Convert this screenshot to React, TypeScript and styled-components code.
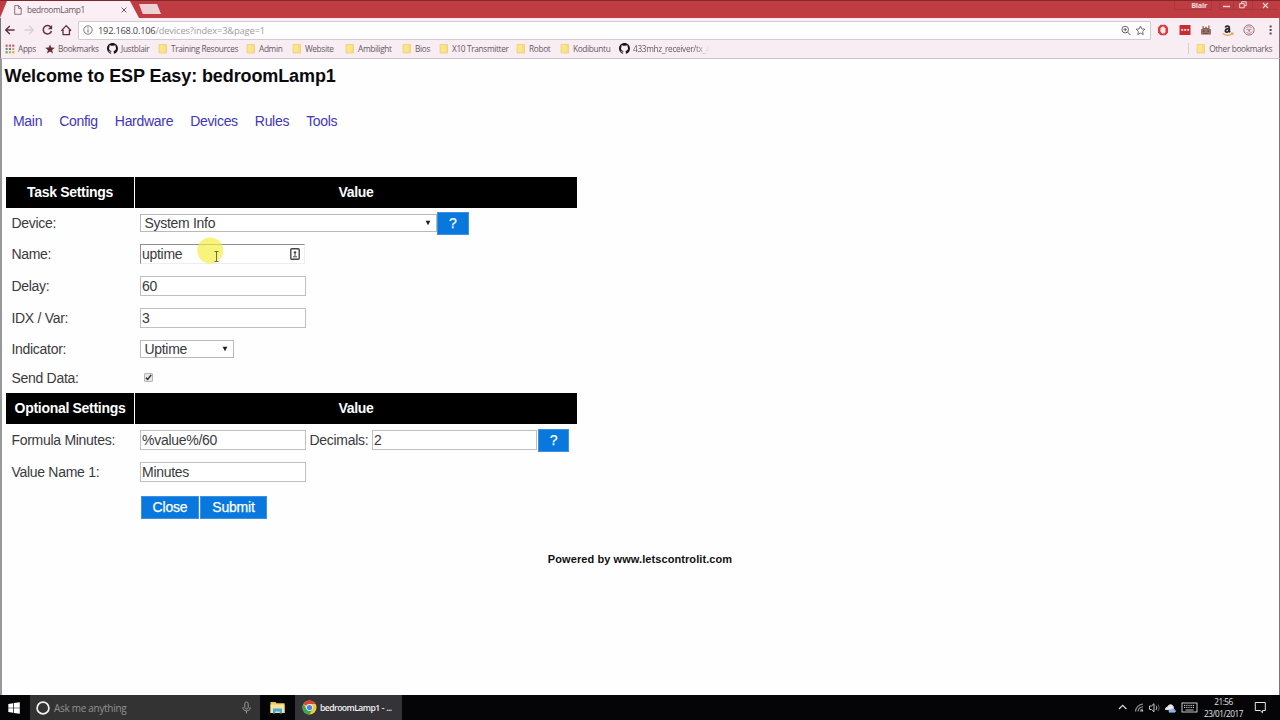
import React from "react";
import styled, { createGlobalStyle } from "styled-components";

const GlobalStyle = createGlobalStyle`
  * { box-sizing: border-box; }
  body { margin: 0; background: #fefefe; overflow: hidden; }
  svg { flex: none; }
`;

const chromeFont = `"Open Sans", "Noto Sans", sans-serif`;

const Screen = styled.div`
  width: 1280px;
  height: 720px;
  display: flex;
  flex-direction: column;
  font-family: "Liberation Sans", Arial, sans-serif;
  color: #333;
`;

const TitleBar = styled.header`
  height: 18px;
  flex: none;
  display: flex;
  align-items: flex-start;
  justify-content: space-between;
  background: #bf3d42;
  border-top: 1px solid #82282b;
  font-family: ${chromeFont};
`;

const TabStrip = styled.div`
  display: flex;
  height: 17px;
`;

const Tab = styled.div`
  width: 139px;
  height: 17px;
  padding: 0 12px 0 14px;
  display: flex;
  align-items: center;
  background: #fbeff5;
  clip-path: polygon(7px 0, 130px 0, 139px 100%, 0 100%);
  font-size: 8.3px;
  color: #65575c;
`;

const TabTitle = styled.span`
  flex: 1;
  margin-left: 5px;
  line-height: 15px;
  letter-spacing: -0.38px;
`;

const NewTab = styled.div`
  width: 22px;
  height: 10px;
  margin-top: 3px;
  background: #edcfd4;
  clip-path: polygon(0 0, 82% 0, 100% 100%, 17% 100%);
`;

const WindowControls = styled.div`
  display: flex;
  height: 9px;
  margin-right: 2px;
`;

const Control = styled.div<{ $w: number }>`
  width: ${(p) => p.$w}px;
  height: 9px;
  display: flex;
  align-items: center;
  justify-content: center;
  border: 1px solid #a8383d;
  border-width: 0 0 1px 1px;
  color: #f3d9da;
`;

const UserName = styled(Control)`
  justify-content: flex-end;
  margin-right: 7px;
  padding-right: 4px;
  border-right-width: 1px;
  font-size: 7.4px;
  font-weight: 700;
  line-height: 8px;
  letter-spacing: -0.3px;
`;

const Toolbar = styled.div`
  height: 23px;
  flex: none;
  display: flex;
  align-items: center;
  padding: 1px 2px 0 4px;
  background: #f9edf4;
  border-left: 1px solid #777;
  border-right: 1px solid #8b7077;
`;

const NavIcons = styled.div`
  width: 73px;
  display: flex;
  gap: 6.6px;
`;

const Address = styled.div`
  width: 1073px;
  flex: none;
  height: 19px;
  display: flex;
  align-items: center;
  padding: 0 4px 0 4px;
  background: #fefefe;
  border: 1px solid #d3cbd0;
  border-radius: 1px;
  font-family: ${chromeFont};
`;

const Url = styled.div`
  flex: 1;
  margin-left: 5px;
  padding-top: 1px;
  font-size: 9.3px;
  line-height: 16px;
  color: #a19ba0;
`;

const Host = styled.span`
  color: #493e46;
  letter-spacing: -0.24px;
`;

const Path = styled.span`
  letter-spacing: -0.12px;
`;

const Extensions = styled.div`
  flex: 1;
  display: flex;
  align-items: center;
  gap: 9.6px;
  padding-left: 6px;
`;

const BookmarksBar = styled.nav`
  height: 18px;
  flex: none;
  display: flex;
  align-items: center;
  padding: 0 7px 2px 4px;
  background: #f9edf4;
  border-bottom: 1px solid #ccc4c8;
  border-left: 1px solid #777;
  border-right: 1px solid #8b7077;
  font-family: ${chromeFont};
  font-size: 8.3px;
  color: #65595f;
`;

const Bookmark = styled.div<{ $w: number }>`
  width: ${(p) => p.$w}px;
  flex: none;
  display: flex;
  align-items: center;
  white-space: nowrap;
  overflow: hidden;
`;

const BookmarkLabel = styled.span<{ $fade?: boolean }>`
  margin-left: 3px;
  line-height: 15px;
  letter-spacing: -0.35px;
  ${(p) => p.$fade && "mask-image: linear-gradient(90deg, #000 80%, transparent);"}
`;

const Spacer = styled.div`
  flex: 1;
`;

const Divider = styled.div`
  width: 1px;
  height: 11px;
  margin-right: 7px;
  background: #d5cbd0;
`;

const Page = styled.main`
  flex: 1;
  min-height: 0;
  display: flex;
  flex-direction: column;
  padding: 0 0 0 4px;
  border-left: 2px solid #98989a;
  border-right: 1px solid #777;
  background: #fefefe;
`;

const Heading = styled.h1`
  margin: 5px 0 0 -1.4px;
  height: 24px;
  font-size: 18px;
  line-height: 24px;
  letter-spacing: -0.1px;
  font-weight: 700;
  color: #0b0b0f;
`;

const Menu = styled.nav`
  display: flex;
  gap: 17px;
  margin: 22px 0 0 7px;
  height: 22px;
  font-size: 14px;
  line-height: 22px;
  letter-spacing: -0.3px;
`;

const MenuLink = styled.a`
  color: #4136bd;
`;

const Settings = styled.section`
  width: 571px;
  margin-top: 45px;
`;

const HeaderRow = styled.div`
  height: 31px;
  display: grid;
  grid-template-columns: 128px 442px;
  column-gap: 1px;
`;

const HeaderCell = styled.div`
  display: flex;
  align-items: center;
  justify-content: center;
  padding-bottom: 2px;
  background: #000;
  color: #fff;
  font-size: 14px;
  letter-spacing: -0.3px;
  font-weight: 700;
`;

const Row = styled.div<{ $h: number; $lift?: number }>`
  height: ${(p) => p.$h}px;
  padding-bottom: ${(p) => p.$lift ?? 0}px;
  display: grid;
  grid-template-columns: 129px 442px;
`;

const Label = styled.div`
  display: flex;
  align-items: center;
  padding-left: 5.4px;
  font-size: 14px;
  letter-spacing: -0.28px;
  line-height: 18px;
  color: #3a3a3c;
`;

const Cell = styled.div`
  display: flex;
  align-items: center;
  padding-left: 5px;
  font-size: 14px;
  letter-spacing: -0.28px;
  color: #3a3a3c;
`;

const Field = styled.div<{ $w?: number }>`
  width: ${(p) => p.$w ?? 166}px;
  height: 20px;
  display: flex;
  align-items: center;
  justify-content: space-between;
  padding: 0 5px 0 1px;
  border: 1px solid #c0c0c0;
  line-height: 18px;
  background: #fff;
`;

const InsetField = styled(Field)`
  padding-right: 4px;
  padding-bottom: 1px;
  border-color: #8e8e8e #eee #eee #8e8e8e;
`;

const SelectBox = styled.div<{ $w: number }>`
  width: ${(p) => p.$w}px;
  height: 18px;
  display: flex;
  align-items: center;
  justify-content: space-between;
  padding: 0 5px 0 3.4px;
  border: 1px solid #b9b9b9;
  line-height: 16px;
  background: #fff;
`;

const Button = styled.div<{ $w: number; $flush?: boolean }>`
  width: ${(p) => p.$w}px;
  height: 23px;
  display: flex;
  align-items: center;
  justify-content: center;
  margin-left: ${(p) => (p.$flush ? 0 : 1)}px;
  background: #0877de;
  border: 1px solid #3f92e2;
  color: #fff;
  font-size: 14px;
  letter-spacing: -0.2px;
  -webkit-text-stroke: 0.25px #fff;
`;

const Inline = styled.span`
  width: 66px;
  padding-left: 3.4px;
`;

const CheckBox = styled.div`
  width: 9px;
  height: 9px;
  margin-left: 4px;
  display: flex;
  border: 1px solid #b5b5b5;
  border-radius: 1px;
  background: #e6e6e6;
`;

const Footer = styled.footer`
  margin: 25px 5px 0 0;
  height: 16px;
  text-align: center;
  font-size: 11px;
  line-height: 16px;
  letter-spacing: 0.08px;
  font-weight: 700;
  color: #111;
`;

const Pointer = styled.svg`
  position: absolute;
  left: 196px;
  top: 236px;
`;

const Taskbar = styled.footer`
  height: 25px;
  flex: none;
  display: flex;
  align-items: stretch;
  background: #050508;
  font-family: ${chromeFont};
`;

const StartButton = styled.div`
  width: 30px;
  display: flex;
  align-items: center;
  justify-content: center;
  padding-right: 2px;
`;

const Search = styled.div`
  width: 230px;
  display: flex;
  align-items: center;
  padding: 0 9px 0 6px;
  background: #333334;
  font-size: 10px;
  letter-spacing: -0.3px;
  color: #929292;
`;

const SearchText = styled.span`
  flex: 1;
  margin-left: 4px;
`;

const TaskIcon = styled.div`
  width: 35px;
  display: flex;
  align-items: center;
  justify-content: center;
`;

const TaskItem = styled.div`
  width: 107px;
  display: flex;
  align-items: center;
  gap: 3px;
  padding-left: 7px;
  background: #333338;
  color: #f2f2f2;
  font-size: 8.6px;
  font-weight: 600;
  letter-spacing: -0.55px;
  word-spacing: 0.5px;
  white-space: nowrap;
`;

const Tray = styled.div`
  display: flex;
  align-items: center;
  margin-right: 13px;
`;

const Clock = styled.div`
  width: 56px;
  padding-right: 5px;
  text-align: center;
  font-size: 8.2px;
  line-height: 12px;
  letter-spacing: -0.45px;
  color: #e4e4e4;
`;

const FolderIcon = () => (
  <svg width="10" height="11" viewBox="0 0 10 11">
    <path d="M1 1.5h7.5v8.5H1z" fill="#fbe48c" stroke="#e8cb6c" strokeWidth=".7" />
    <path d="M7.2 1.5v8.5" stroke="#f2d675" strokeWidth=".8" />
  </svg>
);

const GithubIcon = () => (
  <svg width="11" height="11" viewBox="0 0 16 16">
    <path
      fill="#18161a"
      d="M8 0C3.58 0 0 3.58 0 8c0 3.54 2.29 6.53 5.47 7.59.4.07.55-.17.55-.38v-1.49c-2.01.37-2.53-.49-2.69-.94-.09-.23-.48-.94-.82-1.13-.28-.15-.68-.52-.01-.53.63-.01 1.08.58 1.23.82.72 1.21 1.87.87 2.33.66.07-.52.28-.87.51-1.07-1.78-.2-3.64-.89-3.64-3.95 0-.87.31-1.59.82-2.15-.08-.2-.36-1.02.08-2.12 0 0 .67-.21 2.2.82A7.6 7.6 0 0 1 8 3.86c.68 0 1.36.09 2 .27 1.53-1.04 2.2-.82 2.2-.82.44 1.1.16 1.92.08 2.12.51.56.82 1.27.82 2.15 0 3.07-1.87 3.75-3.65 3.95.29.25.54.73.54 1.48v2.2c0 .21.15.46.55.38A8 8 0 0 0 16 8c0-4.42-3.58-8-8-8z"
    />
  </svg>
);

const AppsIcon = () => (
  <svg width="10" height="10" viewBox="0 0 10 10">
    {["#c65a5a", "#bb6565", "#c65a5a", "#5e9d68", "#5b7fc0", "#d1a644", "#5e9d68", "#d1a644", "#d1a644"].map((c, i) => (
      <rect key={i} x={0.6 + (i % 3) * 3.3} y={0.6 + Math.floor(i / 3) * 3.3} width="2.1" height="2.1" fill={c} />
    ))}
  </svg>
);

const StarIcon = () => (
  <svg width="10" height="10" viewBox="0 0 10 10">
    <path d="M5 .4l1.3 3.2 3.5.2L7.1 6l.9 3.5L5 7.6 2 9.5 2.9 6 .2 3.8l3.5-.2z" fill="#632c37" />
  </svg>
);

const PageIcon = () => (
  <svg width="8" height="10" viewBox="0 0 8 10" fill="none" stroke="#75686e" strokeWidth=".9">
    <path d="M.7.6h4l2.5 2.6v6.1H.7zM4.6.8v2.6h2.5" />
  </svg>
);

const Navigation = () => (
  <NavIcons>
    <svg width="12" height="12" viewBox="0 0 12 12" fill="none" stroke="#5d303b" strokeWidth="1.4">
      <path d="M9.6 6H1M4.8 1.9L.7 6l4.1 4.1" />
    </svg>
    <svg width="12" height="12" viewBox="0 0 12 12" fill="none" stroke="#d9ccd2" strokeWidth="1.3">
      <path d="M.5 6h8.8M5.1 1.9L9.2 6l-4.1 4.1" />
    </svg>
    <svg width="12" height="12" viewBox="0 0 12 12" fill="none" stroke="#5d303b" strokeWidth="1.5">
      <path d="M8.8 3.2A4.2 4.2 0 1 0 9.5 7" />
      <path d="M10.1 1v4.2H5.9z" fill="#5d303b" stroke="none" />
    </svg>
    <svg width="12" height="12" viewBox="0 0 12 12" fill="none" stroke="#5d303b" strokeWidth="1.3">
      <path d="M.3 6.8L5.2 1.6l4.9 5.2M2 5.8v4.9h6.4V5.8" />
    </svg>
  </NavIcons>
);

const ExtensionIcons = () => (
  <Extensions>
    <svg width="12" height="12" viewBox="0 0 11 12">
      <path d="M3 .8h5l2.5 2.7v5L8 11.2H3L.5 8.5v-5z" fill="#d83b40" />
      <path d="M3 6V3.8h1V2.9h1V2.2h1v.7h1v1h1v4L6.8 9.5H4.5L2.6 7z" fill="#fbe8ea" />
    </svg>
    <svg width="12" height="10" viewBox="0 0 11 10">
      <rect width="11" height="10" fill="#cb2c34" />
      <path d="M1.7 4.1h2v1.6h-2zm3 0h2v1.6h-2zm3 0h1.8v1.6H7.7z" fill="#f7dce0" />
    </svg>
    <svg width="12" height="10" viewBox="0 0 11 10">
      <path d="M.5 4h10v5.6H.5z" fill="#9b6e66" />
      <path d="M2 4V1h1.2v2h1.6V1.8h1.4V3h1.6V.6H9V4z" fill="#79605f" />
      <path d="M2.3 5.5h1.6v1.2H2.3zm4.6 0h1.6v1.2H6.9zM3 8h5v.8H3z" fill="#584349" />
    </svg>
    <svg width="12" height="13" viewBox="0 0 12 13" fill="none">
      <path d="M3.3 3.5C3.8 1.6 7.3 1.5 7.3 3.9v3.4l.8 1M7.2 4.7C2.6 4.6 2.6 8.2 4.7 8.2c1.4 0 2.3-1 2.5-2" stroke="#29252a" strokeWidth="1.7" />
      <path d="M.6 9.2c3 2.5 7 2.5 10 .2M8.6 9h2.2v2" stroke="#e6a34c" strokeWidth="1.2" />
    </svg>
    <svg width="12" height="12" viewBox="0 0 12 12" fill="none" stroke="#8c777e">
      <circle cx="6" cy="6" r="5.1" strokeWidth="1" />
      <path d="M2.8 4.2c1-1.8 5.1-2 6.2.1M3 7.8C4.6 10.1 8 9.8 9.2 7.4M3.4 5.4h2v2M8.6 5.2h-2v3" stroke="#ac6c70" strokeWidth=".8" />
    </svg>
    <svg width="12" height="12" viewBox="0 0 4 12" fill="#61414c">
      <rect x=".6" y="1.5" width="2" height="2" />
      <rect x=".6" y="5" width="2" height="2" />
      <rect x=".6" y="8.5" width="2" height="2" />
    </svg>
  </Extensions>
);

const Arrow = () => (
  <svg width="6" height="6" viewBox="0 0 6 6">
    <path d="M.6.8h4.8L3 5.3z" fill="#222" />
  </svg>
);

const bookmarks: Array<[string, number, "folder" | "git"]> = [
  ["Justblair", 51, "git"],
  ["Training Resources", 88, "folder"],
  ["Admin", 46, "folder"],
  ["Website", 53, "folder"],
  ["Ambilight", 57, "folder"],
  ["Bios", 37, "folder"],
  ["X10 Transmitter", 77, "folder"],
  ["Robot", 44, "folder"],
  ["Kodibuntu", 59, "folder"],
];

const FieldRow = ({ label, value }: { label: string; value: string }) => (
  <Row $h={32}>
    <Label>{label}</Label>
    <Cell>
      <Field>{value}</Field>
    </Cell>
  </Row>
);

const SectionHeader = ({ title }: { title: string }) => (
  <HeaderRow>
    <HeaderCell>{title}</HeaderCell>
    <HeaderCell>Value</HeaderCell>
  </HeaderRow>
);

export default function App() {
  return (
    <Screen>
      <GlobalStyle />
      <TitleBar>
        <TabStrip>
          <Tab>
            <PageIcon />
            <TabTitle>bedroomLamp1</TabTitle>
            <svg width="6" height="6" viewBox="0 0 6 6" stroke="#6c5960" strokeWidth="1">
              <path d="M.6.6l4.8 4.8M5.4.6L.6 5.4" />
            </svg>
          </Tab>
          <NewTab />
        </TabStrip>
        <WindowControls>
          <UserName $w={38}>Blair</UserName>
          <Control $w={14}>
            <svg width="7" height="6"><path d="M0 4.5h7" stroke="#f3d9da" strokeWidth="1.4" /></svg>
          </Control>
          <Control $w={19}>
            <svg width="8" height="8" viewBox="0 0 8 8" fill="none" stroke="#f3d9da">
              <path d="M.7 2.6h4.5v4.2H.7zM2.6 2.3V.7h4.6v4H5.5" />
            </svg>
          </Control>
          <Control $w={26}>
            <svg width="7" height="7" viewBox="0 0 7 7" stroke="#f3d9da" strokeWidth="1.1">
              <path d="M1 1l5 5M6 1L1 6" />
            </svg>
          </Control>
        </WindowControls>
      </TitleBar>
      <Toolbar>
        <Navigation />
        <Address>
          <svg width="10" height="10" viewBox="0 0 10 10" fill="none" stroke="#756b72">
            <circle cx="5" cy="5" r="4.2" strokeWidth=".9" />
            <path d="M5 4.3v3.2M5 2.4v1.1" strokeWidth="1" />
          </svg>
          <Url>
            <Host>192.168.0.106</Host>
            <Path>/devices?index=3&amp;page=1</Path>
          </Url>
          <svg width="25" height="11" viewBox="0 0 25 11" fill="none" stroke="#665d64">
            <circle cx="4.2" cy="4.6" r="3.3" strokeWidth="1" />
            <path d="M6.7 7.1l2.8 3M2.6 4.6h3.2M4.2 3v3.2" strokeWidth="1" />
            <path d="M19.5 1l1.3 2.9 3.1.3-2.3 2.2.6 3.2-2.7-1.6-2.7 1.6.6-3.2-2.3-2.2 3.1-.3z" strokeWidth=".9" />
          </svg>
        </Address>
        <ExtensionIcons />
      </Toolbar>
      <BookmarksBar>
        <Bookmark $w={40}>
          <AppsIcon />
          <BookmarkLabel>Apps</BookmarkLabel>
        </Bookmark>
        <Bookmark $w={62}>
          <StarIcon />
          <BookmarkLabel>Bookmarks</BookmarkLabel>
        </Bookmark>
        {bookmarks.map(([label, width, icon]) => (
          <Bookmark key={label} $w={width}>
            {icon === "git" ? <GithubIcon /> : <FolderIcon />}
            <BookmarkLabel>{label}</BookmarkLabel>
          </Bookmark>
        ))}
        <Bookmark $w={91}>
          <GithubIcon />
          <BookmarkLabel $fade>433mhz_receiver/tx_4</BookmarkLabel>
        </Bookmark>
        <Spacer />
        <Divider />
        <FolderIcon />
        <BookmarkLabel>Other bookmarks</BookmarkLabel>
      </BookmarksBar>
      <Page>
        <Heading>Welcome to ESP Easy: bedroomLamp1</Heading>
        <Menu>
          {["Main", "Config", "Hardware", "Devices", "Rules", "Tools"].map((m) => (
            <MenuLink key={m}>{m}</MenuLink>
          ))}
        </Menu>
        <Settings>
          <SectionHeader title="Task Settings" />
          <Row $h={30}>
            <Label>Device:</Label>
            <Cell>
              <SelectBox $w={297}>System Info<Arrow /></SelectBox>
              <Button $w={31.5} $flush>?</Button>
            </Cell>
          </Row>
          <Row $h={32}>
            <Label>Name:</Label>
            <Cell>
              <InsetField $w={165}>
                uptime
                <svg width="10" height="12" viewBox="0 0 10 12" fill="none" stroke="#444">
                  <rect x=".8" y=".8" width="8.4" height="10.4" rx="1" strokeWidth="1.4" />
                  <path d="M3 8.8h4M5 5.8V8" strokeWidth="1" />
                  <circle cx="5" cy="4.5" r="1.3" fill="#444" stroke="none" />
                </svg>
              </InsetField>
            </Cell>
          </Row>
          <FieldRow label="Delay:" value="60" />
          <FieldRow label="IDX / Var:" value="3" />
          <Row $h={30}>
            <Label>Indicator:</Label>
            <Cell>
              <SelectBox $w={94}>Uptime<Arrow /></SelectBox>
            </Cell>
          </Row>
          <Row $h={29} $lift={2}>
            <Label>Send Data:</Label>
            <Cell>
              <CheckBox>
                <svg width="7" height="7" viewBox="0 0 7 7" fill="none" stroke="#333" strokeWidth="1.5">
                  <path d="M.9 3.7l1.7 1.7L6.2.9" />
                </svg>
              </CheckBox>
            </Cell>
          </Row>
          <SectionHeader title="Optional Settings" />
          <Row $h={32}>
            <Label>Formula Minutes:</Label>
            <Cell>
              <Field>%value%/60</Field>
              <Inline>Decimals:</Inline>
              <Field $w={165}>2</Field>
              <Button $w={31}>?</Button>
            </Cell>
          </Row>
          <FieldRow label="Value Name 1:" value="Minutes" />
          <Row $h={38}>
            <Label />
            <Cell>
              <Button $w={58}>Close</Button>
              <Button $w={67}>Submit</Button>
            </Cell>
          </Row>
        </Settings>
        <Footer>Powered by www.letscontrolit.com</Footer>
        <Pointer width="30" height="30" viewBox="0 0 30 30" fill="none">
          <circle cx="14.3" cy="14.5" r="13" fill="#f5ee3c" fillOpacity=".68" />
          <path d="M18.5 15.5h4M18.5 25.5h4M20.5 15.5v10" stroke="#6b6b52" strokeWidth="1" />
        </Pointer>
      </Page>
      <Taskbar>
        <StartButton>
          <svg width="12" height="12" viewBox="0 0 12 12" fill="#fff">
            <path d="M.3 1.9l4.8-.7v4.5H.3zM5.8 1.1L11.8.2v5.5h-6zM.3 6.3h4.8v4.5l-4.8-.7zM5.8 6.3h6v5.5l-6-.9z" />
          </svg>
        </StartButton>
        <Search>
          <svg width="14" height="14" viewBox="0 0 14 14" fill="none">
            <circle cx="7" cy="7" r="5.9" stroke="#f2f2f2" strokeWidth="1.7" />
          </svg>
          <SearchText>Ask me anything</SearchText>
          <svg width="9" height="13" viewBox="0 0 9 13" fill="none" stroke="#999" strokeWidth="1">
            <rect x="2.8" y="1" width="3.4" height="7" rx="1.7" />
            <path d="M1 6v1.5c0 3 7 3 7 0V6M4.5 9.8v2.6" />
          </svg>
        </Search>
        <TaskIcon>
          <svg width="15" height="13" viewBox="0 0 15 13">
            <path d="M.5 1h5l1 1.2h8V12H.5z" fill="#f0c858" />
            <path d="M.5 3.5h14V12H.5z" fill="#fbe397" />
            <path d="M3 12.5V7.6h9v4.9h-2.4v-2H5.4v2z" fill="#46a9dd" />
          </svg>
        </TaskIcon>
        <TaskItem>
          <svg width="15" height="15" viewBox="0 0 16 16">
            <circle cx="8" cy="8" r="7.5" fill="#f5c932" />
            <path d="M8 8L1.5 4.25A7.5 7.5 0 0 1 14.5 4.25H8z" fill="#dd4436" />
            <path d="M1.5 4.25A7.5 7.5 0 0 0 7.7 15.5L11.2 9.8 8 8 4.8 9.8z" fill="#3ba558" />
            <circle cx="8" cy="8" r="3.7" fill="#f1f1f1" />
            <circle cx="8" cy="8" r="2.8" fill="#4587e8" />
          </svg>
          bedroomLamp1 - ...
        </TaskItem>
        <Spacer />
        <Tray>
          <svg width="80" height="15" viewBox="0 0 80 15" fill="none" stroke="#ddd">
            <path d="M1 9l3.7-3.7L8.4 9" strokeWidth="1.2" />
            <path d="M17.5 11.5A8 8 0 0 1 25 4M20 11.5A5.5 5.5 0 0 1 25 6.7M22.3 11.5A3 3 0 0 1 25 9" stroke="#999" strokeWidth="1.1" />
            <path d="M24.2 11.5v-1.3" strokeWidth="1.8" />
            <path d="M31.5 6v3.5h2l2.5 2.3V3.7L33.5 6z" strokeWidth=".9" />
            <path d="M38 5.7c1 1.4 1 2.9 0 4.2" strokeWidth=".9" />
            <path d="M39.9 4.4c1.6 2.2 1.6 4.7 0 6.8" stroke="#777" strokeWidth=".8" />
            <path d="M47.5 9.5c0-2 1.2-2.5 2.1-2.3.5-2.9 5-3.5 5.7-.2v3z" fill="#eee" />
            <path d="M51 11.8c0-2 1-2.3 1.8-2.1.8-2 3.7-1.6 3.9.5 1.2.2 1.1 2 0 2H51z" fill="#83aef0" stroke="#ccd9f1" strokeWidth=".5" />
            <rect x="64" y="3" width="15" height="9" strokeWidth=".9" />
            <path d="M66 5.4h11M66 7.4h11" strokeDasharray="1.2 1" />
            <path d="M67.5 10h8" strokeWidth=".9" />
          </svg>
          <Clock>
            21:56
            <br />
            23/01/2017
          </Clock>
          <svg width="13" height="13" viewBox="0 0 13 13" fill="none" stroke="#e7e7e7" strokeWidth="1">
            <path d="M1.3 1.5h10v8H8.5v2.3L6.2 9.5H1.3z" />
          </svg>
        </Tray>
      </Taskbar>
    </Screen>
  );
}
